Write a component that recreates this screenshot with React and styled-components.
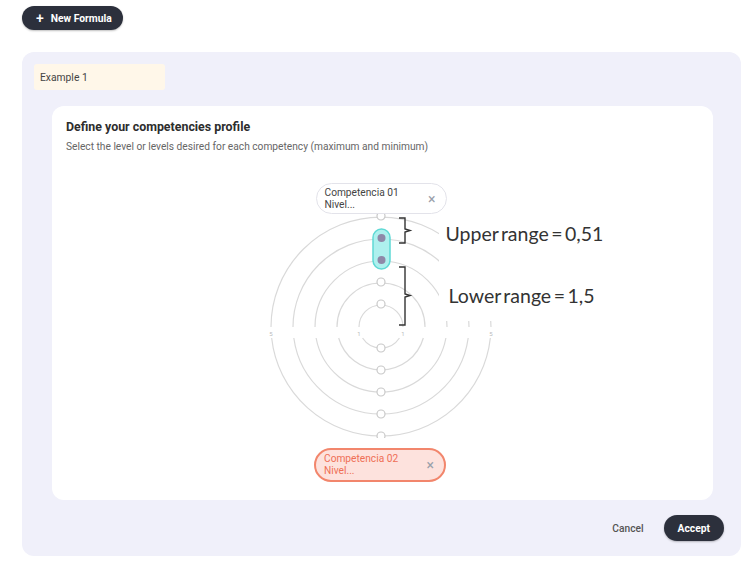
import React from 'react'
import styled, { createGlobalStyle } from 'styled-components'

const Global = createGlobalStyle`
  body {
    margin: 0;
    background: #fff;
    font-family: Roboto, 'Liberation Sans', sans-serif;
    color: #333;
  }
`

const Page = styled.div`
  width: 751px;
  height: 562px;
  padding: 6px 10px 0 22px;
  box-sizing: border-box;
`

const DarkButton = styled.button`
  display: inline-flex;
  align-items: center;
  gap: 7px;
  height: ${p => p.$h || 24}px;
  padding: 0 ${p => p.$pr || 12}px 0 ${p => p.$pl || 12}px;
  border: none;
  border-radius: 13px;
  background: #2c303c;
  color: #fff;
  font-family: Roboto, sans-serif;
  font-size: 10.3px;
  font-weight: 700;
  cursor: pointer;
  box-shadow: 0 1px 2px rgba(0, 0, 0, 0.25);
`

const Plus = styled.span`
  font-size: 14px;
  font-weight: 500;
  line-height: 1;
  margin-top: -1px;
`

const Panel = styled.div`
  margin-top: 22px;
  width: 719px;
  height: 504px;
  background: #f0f0fa;
  border-radius: 12px;
  padding: 12px 0 0 12px;
  box-sizing: border-box;
  display: flex;
  flex-direction: column;
`

const Tab = styled.div`
  width: 131px;
  height: 26px;
  background: #fff7e9;
  border-radius: 3px;
  font-size: 10.3px;
  color: #444;
  display: flex;
  align-items: center;
  padding-left: 6px;
  box-sizing: border-box;
`

const Card = styled.div`
  margin: 16px 0 0 18px;
  width: 661px;
  height: 394px;
  background: #fff;
  border-radius: 12px;
  padding: 13px 14px 0;
  box-sizing: border-box;
  display: flex;
  flex-direction: column;
`

const Title = styled.h3`
  margin: 0;
  font-size: 12.4px;
  font-weight: 700;
  color: #2d2d2d;
  line-height: 16px;
`

const Subtitle = styled.p`
  margin: 5px 0 0;
  font-size: 10.2px;
  color: #666;
  line-height: 13px;
`

const ChartArea = styled.div`
  align-self: center;
  margin: 30px 0 0 -4px;
  width: 240px;
  display: flex;
  flex-direction: column;
  align-items: center;
`

const Chip = styled.div`
  width: ${p => (p.$danger ? 132 : 131)}px;
  height: ${p => (p.$danger ? 34 : 31)}px;
  box-sizing: border-box;
  border-radius: 17px;
  border: ${p => (p.$danger ? '2px solid #f2866c' : '1px solid #e3e3ea')};
  background: ${p => (p.$danger ? '#fde2dd' : '#fff')};
  color: ${p => (p.$danger ? '#ef6f55' : '#444')};
  display: flex;
  align-items: center;
  justify-content: space-between;
  padding: 0 10px 0 8px;
  font-size: 10.2px;
  line-height: 12px;
  margin-left: ${p => (p.$danger ? -1 : 1)}px;
  margin-top: ${p => (p.$danger ? 10 : 0)}px;
  position: relative;
  z-index: 1;
`

const Close = styled.span`
  color: #9aa0aa;
  font-size: 14px;
  line-height: 1;
`

const Rings = styled.div`
  position: relative;
  width: 240px;
  height: 224px;
`

const Annotation = styled.div`
  position: absolute;
  left: 136px;
  top: -2px;
  width: 250px;
  height: 109px;
  display: flex;
`

const Brackets = styled.svg`
  width: 42px;
  height: 115px;
  flex: none;
`

const Notes = styled.div`
  flex: 1;
  background: #fff;
  display: flex;
  flex-direction: column;
  padding-left: 7px;
  font-family: Lato, 'Open Sans', sans-serif;
  font-size: 19.5px;
  color: #333;
  word-spacing: -2.5px;
`

const Note = styled.div`
  line-height: 22px;
  margin-top: ${p => p.$top}px;
  margin-left: ${p => p.$left || 0}px;
`

const Footer = styled.div`
  display: flex;
  justify-content: flex-end;
  align-items: center;
  gap: 20px;
  padding: 15px 17px 0 0;
`

const TextButton = styled.button`
  border: none;
  background: none;
  font-family: Roboto, sans-serif;
  font-size: 10.2px;
  font-weight: 500;
  color: #555;
  padding: 0;
  cursor: pointer;
`

const cx = 120
const cy = 112
const radii = [22, 44, 66, 88, 110]

function Chart () {
  return (
    <svg width='240' height='224' viewBox='0 0 240 224'>
      {radii.map(r => {
        const dy = 12
        const dx = Math.sqrt(r * r - dy * dy)
        return (
          <g key={r} fill='none' stroke='#d9d9d9' strokeWidth='1.2'>
            <path d={`M ${cx - r} ${cy + 1} A ${r} ${r} 0 0 1 ${cx + r} ${cy + 1}`} />
            <path d={`M ${cx + dx} ${cy + dy} A ${r} ${r} 0 0 1 ${cx - dx} ${cy + dy}`} />
          </g>
        )
      })}
      {[110, 22].map(r => (
        <g key={r} fill='#bbb' fontSize='6' fontFamily='Roboto, sans-serif' textAnchor='middle'>
          <text x={cx - r} y={cy + 10}>{r === 110 ? 5 : 1}</text>
          <text x={cx + r} y={cy + 10}>{r === 110 ? 5 : 1}</text>
        </g>
      ))}
      {radii.map(r => (
        <g key={r} fill='#fff' stroke='#c9c9c9' strokeWidth='1.2'>
          {r !== 66 && r !== 88 && <circle cx={cx} cy={cy - r} r='4' />}
          <circle cx={cx} cy={cy + r} r='4' />
        </g>
      ))}
      <rect x='112' y='15' width='17' height='40' rx='8.5' fill='#aef0ee' stroke='#5fd9d5' strokeWidth='1.5' />
      <circle cx='120.5' cy='24' r='4' fill='#8e88a8' />
      <circle cx='120.5' cy='46' r='4' fill='#8e88a8' />
    </svg>
  )
}

export default function App () {
  return (
    <Page>
      <Global />
      <DarkButton $pl={14} $pr={11}>
        <Plus>+</Plus> New Formula
      </DarkButton>
      <Panel>
        <Tab>Example 1</Tab>
        <Card>
          <Title>Define your competencies profile</Title>
          <Subtitle>Select the level or levels desired for each competency (maximum and minimum)</Subtitle>
          <ChartArea>
            <Chip>
              <span>Competencia 01<br />Nivel...</span>
              <Close>×</Close>
            </Chip>
            <Rings>
              <Chart />
              <Annotation>
                <Brackets viewBox='0 0 42 115'>
                  <g fill='none' stroke='#333' strokeWidth='1.4'>
                    <path d='M 2 6 H 8 V 17 L 13 18.5 L 8 20 V 31 H 2' />
                    <path d='M 2 55 H 8 V 82 L 13 83.5 L 8 85 V 113 H 2' />
                  </g>
                </Brackets>
                <Notes>
                  <Note $top={11}>Upper range = 0,51</Note>
                  <Note $top={40} $left={3}>Lower range = 1,5</Note>
                </Notes>
              </Annotation>
            </Rings>
            <Chip $danger>
              <span>Competencia 02<br />Nivel...</span>
              <Close>×</Close>
            </Chip>
          </ChartArea>
        </Card>
        <Footer>
          <TextButton>Cancel</TextButton>
          <DarkButton $h={26} $pl={14} $pr={14}>Accept</DarkButton>
        </Footer>
      </Panel>
    </Page>
  )
}
